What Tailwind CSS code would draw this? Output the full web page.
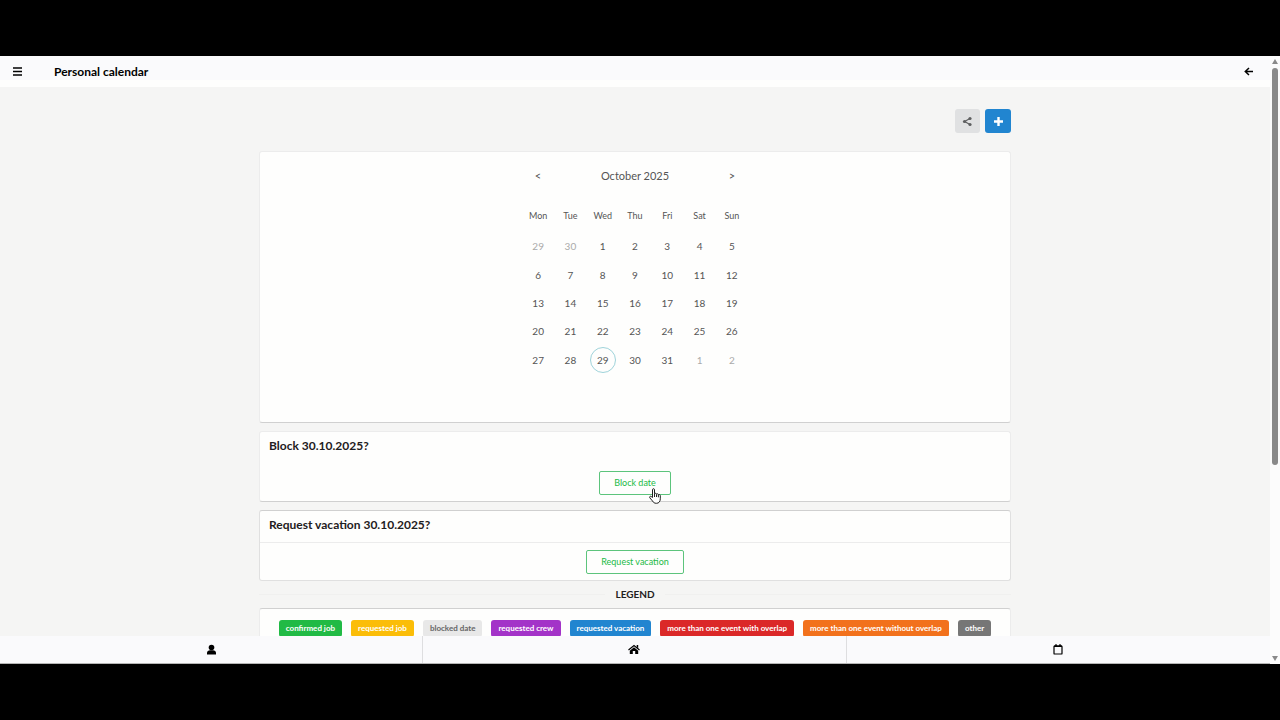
<!DOCTYPE html>
<html lang="en">
<head>
    <meta charset="UTF-8">
    <meta name="viewport" content="width=device-width, initial-scale=1.0">
    <title>Personal calendar</title>
    <script src="https://cdn.jsdelivr.net/npm/@tailwindcss/browser@4"></script>
</head>
<body class="bg-black h-screen py-14 flex font-[Lato,sans-serif] text-[#1f2021]">

    <div class="flex-1 min-w-0 flex flex-col bg-[#f5f5f4]">
        <!-- Top bar -->
        <header class="h-[31px] shrink-0 flex items-center pl-3 pr-4 pt-[7px] bg-[#fafafc] border-b-[7px] border-[#fefefd] text-black">
            <button type="button" aria-label="Menu" class="w-[11px]">
                <svg class="w-[11px] h-[11px]" viewBox="0 0 11 11" fill="currentColor"><path d="M1 1.200h9v1.600H1zM1 4.700h9v1.600H1zM1 8.200h9v1.600H1z"/></svg>
            </button>
            <h1 class="ml-[31px] text-[12px] leading-4 font-bold">Personal calendar</h1>
            <button type="button" aria-label="Back" class="ml-auto">
                <svg class="w-[11px] h-[11px]" viewBox="0 0 11 11" fill="none" stroke="currentColor" stroke-width="1.5"><path d="M10 5.500H2.500M6 2L2.300 5.500 6 9"/></svg>
            </button>
        </header>

        <!-- Content -->
        <main class="flex-1 min-h-0 overflow-hidden">
            <div class="max-w-[752px] mx-auto pt-[22px]">
                <div class="flex justify-end gap-[5px] mb-[18px]">
                    <button type="button" aria-label="Share" class="w-[25px] h-6 rounded-[3px] bg-[#e0e1e2] text-[#5d5e5f] flex items-center justify-center">
                        <svg class="w-[11px] h-[11px]" viewBox="0 0 11 11" fill="currentColor"><path d="M2.500 5.500L8 2.500M2.500 5.500L8 8.500" stroke="currentColor" stroke-width="1.200"/><circle cx="2.500" cy="5.500" r="1.600"/><circle cx="8" cy="2.500" r="1.600"/><circle cx="8" cy="8.500" r="1.600"/></svg>
                    </button>
                    <button type="button" aria-label="Add" class="w-[26px] h-6 rounded-[3px] bg-[#2185d0] text-white flex items-center justify-center">
                        <svg class="w-[9px] h-[9px]" viewBox="0 0 9 9" fill="currentColor"><path d="M3.300 0h2.400v3.300H9v2.400H5.700V9H3.300V5.700H0V3.300h3.300z"/></svg>
                    </button>
                </div>

                <!-- Calendar -->
                <section class="h-[272px] mb-2 pt-4 rounded-[3px] bg-[#fefefd] border border-[#ececec] border-b-[#d0d0d0] text-[#555]">
                    <div class="w-[226px] mx-auto flex items-center justify-between mb-4">
                        <button type="button" aria-label="Previous month" class="w-8 text-[11px] leading-4">&lt;</button>
                        <h2 class="text-[11px] leading-4">October 2025</h2>
                        <button type="button" aria-label="Next month" class="w-8 text-[11px] leading-4">&gt;</button>
                    </div>
                    <table class="w-[226px] h-[174px] mx-auto table-fixed text-center text-[10px] leading-4">
                        <thead class="text-[9px]">
                            <tr class="h-8"><th class="p-0 font-normal">Mon</th><th class="p-0 font-normal">Tue</th><th class="p-0 font-normal">Wed</th><th class="p-0 font-normal">Thu</th><th class="p-0 font-normal">Fri</th><th class="p-0 font-normal">Sat</th><th class="p-0 font-normal">Sun</th></tr>
                        </thead>
                        <tbody>
                            <tr class="h-7"><td class="p-0 text-[#aaa]">29</td><td class="p-0 text-[#aaa]">30</td><td class="p-0">1</td><td class="p-0">2</td><td class="p-0">3</td><td class="p-0">4</td><td class="p-0">5</td></tr>
                            <tr class="h-7"><td class="p-0">6</td><td class="p-0">7</td><td class="p-0">8</td><td class="p-0">9</td><td class="p-0">10</td><td class="p-0">11</td><td class="p-0">12</td></tr>
                            <tr class="h-7"><td class="p-0">13</td><td class="p-0">14</td><td class="p-0">15</td><td class="p-0">16</td><td class="p-0">17</td><td class="p-0">18</td><td class="p-0">19</td></tr>
                            <tr class="h-7"><td class="p-0">20</td><td class="p-0">21</td><td class="p-0">22</td><td class="p-0">23</td><td class="p-0">24</td><td class="p-0">25</td><td class="p-0">26</td></tr>
                            <tr class="h-7"><td class="p-0">27</td><td class="p-0">28</td><td class="p-0"><span class="mx-auto w-[26px] h-[26px] rounded-full border border-[#9fd3da] flex items-center justify-center">29</span></td><td class="p-0">30</td><td class="p-0">31</td><td class="p-0 text-[#aaa]">1</td><td class="p-0 text-[#aaa]">2</td></tr>
                        </tbody>
                    </table>
                </section>

                <!-- Block date -->
                <section class="mb-2 rounded-[3px] bg-[#fefefd] border border-[#ececec] border-b-[#d0d0d0]">
                    <h3 class="h-8 px-[9px] pt-[6px] text-[12px] leading-4 font-bold">Block 30.10.2025?</h3>
                    <div class="flex justify-center pt-[7px] pb-[6px]">
                        <div class="relative flex">
                            <button type="button" class="h-6 px-[14px] rounded-[2px] border border-[#5cc47c] text-[#21ba45] text-[9px] leading-4">Block date</button>
                            <!-- Pointer -->
                            <svg class="absolute left-[50px] top-[17px] w-[12px] h-[16px]" viewBox="0 0 12 16" fill="#fff" stroke="#222" stroke-width="1" stroke-linejoin="round"><path d="M3.500 9.500V1.800c0-1.500 2-1.500 2 0v4c.3-.8 1.900-.7 2 .3.500-.6 1.800-.4 1.900.5.600-.4 1.900 0 1.900 1v3.200c0 2.700-1.400 4.500-3.900 4.500-2 0-3-.8-3.900-2.300L.8 9.800c-.7-1.200.6-2 1.400-1.300z"/><path d="M5.500 6v3M7.500 6.300V9M9.400 7v2.300" fill="none"/></svg>
                        </div>
                    </div>
                </section>

                <!-- Request vacation -->
                <section class="rounded-[3px] bg-[#fefefd] border border-[#e0e0e0] border-t-[#d0d0d0]">
                    <h3 class="h-8 px-[9px] pt-[6px] border-b border-[#ececec] text-[12px] leading-4 font-bold">Request vacation 30.10.2025?</h3>
                    <div class="flex justify-center pt-[7px] pb-[6px]">
                        <button type="button" class="h-6 px-[14px] rounded-[2px] border border-[#5cc47c] text-[#21ba45] text-[9px] leading-4">Request vacation</button>
                    </div>
                </section>

                <!-- Legend -->
                <div class="flex items-center gap-[10px] mt-[5px] mb-[6px] text-[10px] leading-4 font-bold">
                    <span class="flex-1 border-t border-[#f0f0ef]"></span>
                    <h4>LEGEND</h4>
                    <span class="flex-1 border-t border-[#f0f0ef]"></span>
                </div>
                <section class="pt-[11px] pb-3 rounded-[3px] bg-[#fefefd] border border-[#ececec] border-t-[#d0d0d0]">
                    <ul class="flex flex-wrap justify-center gap-[9px] text-[8px] leading-[17px] font-bold text-white whitespace-nowrap">
                        <li class="px-[7px] rounded-[3px] bg-[#21ba45]">confirmed job</li>
                        <li class="px-[7px] rounded-[3px] bg-[#fbbd08]">requested job</li>
                        <li class="px-[7px] rounded-[3px] bg-[#e8e8e8] text-[#666]">blocked date</li>
                        <li class="px-[7px] rounded-[3px] bg-[#a333c8]">requested crew</li>
                        <li class="px-[7px] rounded-[3px] bg-[#2185d0]">requested vacation</li>
                        <li class="px-[7px] rounded-[3px] bg-[#db2828]">more than one event with overlap</li>
                        <li class="px-[7px] rounded-[3px] bg-[#f2711c]">more than one event without overlap</li>
                        <li class="px-[7px] rounded-[3px] bg-[#767676]">other</li>
                    </ul>
                </section>
            </div>
        </main>

        <!-- Bottom navigation -->
        <nav class="h-7 shrink-0 grid grid-cols-3 bg-[#fafafc] border-b border-[#b5b5b5] text-black">
            <a href="#" aria-label="Profile" class="flex items-center justify-center border-r border-[#dedee0]">
                <svg class="w-[11px] h-[11px]" viewBox="0 0 11 11" fill="currentColor"><circle cx="5.500" cy="3.500" r="2.800"/><path d="M1 10.500V9c0-2 1.500-2.800 3-2.800h3c1.500 0 3 .8 3 2.800v1.500z"/></svg>
            </a>
            <a href="#" aria-label="Home" class="flex items-center justify-center border-r border-[#dedee0]">
                <svg class="w-[12px] h-[11px]" viewBox="0 0 12 11" fill="currentColor"><path d="M6 3.300l4.200 3.500V10H7.200V7H4.800v3H1.800V6.800z"/><path d="M.5 6L6 1.500 11.500 6" fill="none" stroke="currentColor" stroke-width="1.200"/><path d="M8.700 1h1.500v3.400L8.700 3z"/></svg>
            </a>
            <a href="#" aria-label="Calendar" class="flex items-center justify-center">
                <svg class="w-[10px] h-[11px]" viewBox="0 0 10 11" fill="none" stroke="currentColor"><rect x="1" y="2" width="8" height="8" rx=".6" stroke-width="1.200"/><path d="M1 2.300h8M3 .3v2M7 .3v2" stroke-width="1.500"/></svg>
            </a>
        </nav>
    </div>

    <!-- Scrollbar -->
    <div class="w-[10px] shrink-0 flex flex-col items-center py-[3px] bg-[#fcfcfc] text-[#8a8a8a]">
        <svg class="w-[6px] h-[5px]" viewBox="0 0 6 5" fill="currentColor"><path d="M3 0l3 5H0z"/></svg>
        <div class="w-[6px] h-[66%] mt-1 mb-auto rounded-full bg-[#8a8a8a]"></div>
        <svg class="w-[6px] h-[5px]" viewBox="0 0 6 5" fill="currentColor"><path d="M0 0h6L3 5z"/></svg>
    </div>

</body>
</html>
